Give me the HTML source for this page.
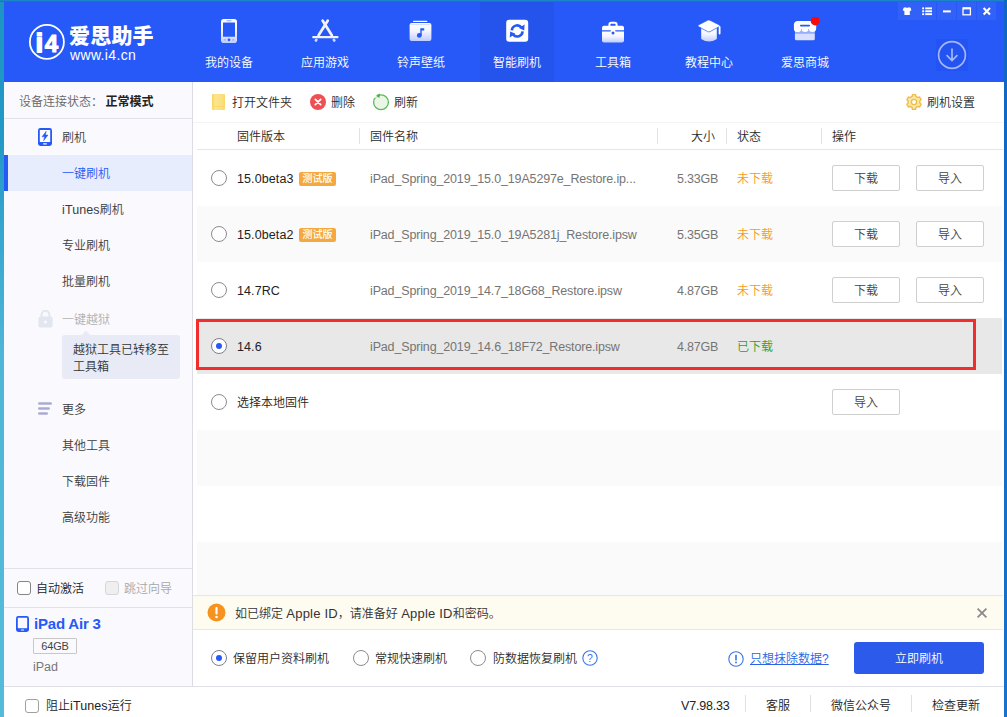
<!DOCTYPE html>
<html lang="zh-CN">
<head>
<meta charset="utf-8">
<title>爱思助手</title>
<style>
*{box-sizing:border-box;margin:0;padding:0}
html,body{width:1007px;height:717px;overflow:hidden;background:#fff}
body{font-family:"Liberation Sans","Noto Sans CJK SC",sans-serif;font-size:12px;font-weight:350;color:#2a2a2a;position:relative}
.abs{position:absolute}
.t{position:absolute;white-space:nowrap;line-height:18px;font-size:12px;margin-top:1px}
.en{font-size:12.5px;letter-spacing:-0.2px}
#frameL{left:0;top:0;width:4px;height:717px;background:linear-gradient(180deg,#1d94c4 0%,#2399c6 20%,#3aa9d0 35%,#4fb6d8 50%,#55bbdb 100%)}
#frameT{left:0;top:0;width:1007px;height:2px;background:linear-gradient(180deg,#1a86c6 0%,#1a86c6 50%,#2168e2 50%,#2168e2 100%)}
#frameR{left:1004px;top:0;width:3px;height:717px;background:linear-gradient(180deg,#0e66c4,#1672cc)}
#header{left:4px;top:2px;width:1000px;height:80px;background:#2659f7}
.nav{position:absolute;top:0;height:80px;width:96px;text-align:center;color:#fff;font-size:12px}
.nav .lbl{position:absolute;left:0;right:0;top:52px;line-height:18px}
.ico{position:absolute}
#sidebar{left:4px;top:82px;width:189px;height:604px;background:#f9f9fe;border-right:1px solid #dcdde3}
.sitem{position:absolute;left:0;width:188px;height:36px;line-height:38px;padding-left:58px;color:#3c3c3c;font-size:12px;white-space:nowrap}
.sitem.sel{background:#e7edfc;color:#2659f7}
#main{left:193px;top:82px;width:811px;height:604px;background:#fff}
.row{position:absolute;left:4px;width:805px;height:56px}
.row .c{position:absolute;top:0;line-height:58px;white-space:nowrap}
.radio{position:absolute;width:16px;height:16px;border:1px solid #8c8c8c;border-radius:50%;background:#fff}
.radio.on::after{content:"";position:absolute;left:4px;top:4px;width:6px;height:6px;border-radius:50%;background:#2659f7}
.btn{position:absolute;width:68px;height:26px;border:1px solid #cfcfcf;border-radius:2px;background:#fff;text-align:center;line-height:26px;color:#444;font-size:12px}
.tag{font-weight:500;position:absolute;width:37px;height:14px;background:#f5a83e;color:#fff;font-size:10px;line-height:14px;text-align:center;border-radius:2px}
#footer{left:4px;top:686px;width:1000px;height:31px;background:#fff;border-top:1px solid #e0e1e6}
.cb{position:absolute;width:14px;height:14px;border:1px solid #858585;border-radius:3px;background:#fff}
</style>
</head>
<body>
<div class="abs" id="header">
  <svg class="abs" style="left:24px;top:21px" width="38" height="38" viewBox="0 0 38 38">
  <circle cx="18.9" cy="18.9" r="17" fill="none" stroke="#fff" stroke-width="1.8"/>
  <text y="29.4" font-family="Liberation Sans, sans-serif" font-weight="bold" font-size="26" fill="#fff" stroke="#fff" stroke-linejoin="round"><tspan x="11.4" text-anchor="middle" stroke-width="1.8">i</tspan><tspan x="23.4" text-anchor="middle" stroke-width="1" font-size="24">4</tspan></text>
</svg>
<div class="t" style="left:65px;top:18px;font-size:21px;font-weight:900;color:#fff;line-height:30px;letter-spacing:0.2px">爱思助手</div>
<div class="t" style="left:66px;top:44px;font-size:14px;font-weight:400;color:#fff;line-height:16px;letter-spacing:0.35px">www.i4.cn</div>
  <svg width="0" height="0" style="position:absolute">
  <defs>
    <linearGradient id="gw" x1="0" y1="0" x2="0" y2="1">
      <stop offset="0" stop-color="#ffffff"/>
      <stop offset="0.45" stop-color="#f4f6ff"/>
      <stop offset="1" stop-color="#c0ccff"/>
    </linearGradient>
  </defs>
</svg>
<div class="abs" style="left:476px;top:0;width:74px;height:80px;background:#2554ec"></div>
<div class="nav" style="left:177px">
  <svg class="ico" style="left:40px;top:17px" width="16" height="24" viewBox="0 0 16 24">
    <rect x="0" y="0" width="16" height="24" rx="2.8" fill="url(#gw)"/>
    <rect x="2" y="3.4" width="12" height="14.4" rx="0.4" fill="#2659f7"/>
    <rect x="5.5" y="1.3" width="5" height="1" rx="0.5" fill="#8ba4fa"/>
    <circle cx="8" cy="20.8" r="1.4" fill="#2659f7"/>
    <rect x="2.6" y="20.2" width="2.4" height="1.2" rx="0.6" fill="#93a9fa"/>
    <rect x="11" y="20.2" width="2.4" height="1.2" rx="0.6" fill="#93a9fa"/>
  </svg>
  <div class="lbl">我的设备</div></div>
<div class="nav" style="left:273px">
  <svg class="ico" style="left:35px;top:17px" width="27" height="24" viewBox="0 0 27 24">
    <g stroke="#f0f3ff" stroke-width="2.7" stroke-linecap="round" fill="none">
      <path d="M10.7 1.7 L19.8 16.2"/>
      <path d="M15.7 1.7 L6.6 16.2"/>
      <path d="M1.3 18.2 H25.4" stroke-width="2.3"/>
      <path d="M3.9 21.5 L4.3 20.9" stroke="#d0d9ff"/>
      <path d="M22.3 21.5 L21.9 20.9" stroke="#d0d9ff"/>
    </g>
  </svg>
  <div class="lbl">应用游戏</div></div>
<div class="nav" style="left:369px">
  <svg class="ico" style="left:36px;top:17px" width="23" height="22" viewBox="0 0 23 22">
    <rect x="4" y="1.8" width="14.4" height="1.3" rx="0.6" fill="#fff"/>
    <rect x="0.6" y="4" width="21.8" height="18" rx="2" fill="url(#gw)"/>
    <rect x="1.6" y="5.4" width="19.8" height="0.7" fill="#c6d1ff"/>
    <circle cx="10.3" cy="16.4" r="2.4" fill="#2659f7"/>
    <path d="M11.3 16.4 V9.2 H15.2 V11.6 H12.7 V16.4z" fill="#2659f7"/>
  </svg>
  <div class="lbl">铃声壁纸</div></div>
<div class="nav" style="left:465px">
  <svg class="ico" style="left:37px;top:17px" width="23" height="24" viewBox="0 0 23 24">
    <rect x="0.2" y="0.8" width="22" height="22" rx="3" fill="#fff"/>
    <g fill="none" stroke="#2659f7" stroke-width="2.6">
      <path d="M5.8 11.4 A5.4 5.4 0 0 1 15.4 8.4"/>
      <path d="M16.6 12.4 A5.4 5.4 0 0 1 7 15.4"/>
    </g>
    <path d="M18.6 5.4 L18.2 11.4 L13 9z" fill="#2659f7"/>
    <path d="M3.8 18.4 L4.2 12.4 L9.4 14.8z" fill="#2659f7"/>
  </svg>
  <div class="lbl">智能刷机</div></div>
<div class="nav" style="left:561px">
  <svg class="ico" style="left:37px;top:19px" width="22" height="22" viewBox="0 0 22 22">
    <path d="M7.4 5 V3.6 A1.8 1.8 0 0 1 9.2 1.8 H12.8 A1.8 1.8 0 0 1 14.6 3.6 V5" fill="none" stroke="#fff" stroke-width="2"/>
    <path d="M0 6.8 A2 2 0 0 1 2 4.8 H20 A2 2 0 0 1 22 6.8 V9.2 H0z" fill="#fff"/>
    <path d="M0 10.6 H22 V19.4 A2 2 0 0 1 20 21.4 H2 A2 2 0 0 1 0 19.4z" fill="url(#gw)"/>
    <rect x="8.6" y="8" width="4.8" height="6.4" rx="2" fill="#fff"/><circle cx="11" cy="12" r="1.5" fill="#2659f7"/>
  </svg>
  <div class="lbl">工具箱</div></div>
<div class="nav" style="left:657px">
  <svg class="ico" style="left:36px;top:17px" width="24" height="24" viewBox="0 0 24 24">
    <path d="M4.2 9 V20 Q12 25 19.8 20 V9z" fill="url(#gw)"/>
    <path d="M10.6 1.3 Q11.8 0.6 13 1.3 L22.4 6 Q23.4 6.8 22.4 7.6 L13 12.6 Q11.8 13.2 10.6 12.6 L1.4 7.6 Q0.4 6.8 1.4 6z" fill="#fff" stroke="#2659f7" stroke-width="0.7"/>
    <path d="M22.6 8 V14.6" stroke="#fff" stroke-width="1.8" fill="none" stroke-linecap="round"/>
  </svg>
  <div class="lbl">教程中心</div></div>
<div class="nav" style="left:753px">
  <svg class="ico" style="left:36px;top:15px" width="30" height="26" viewBox="0 0 30 26">
    <path d="M1.9 16.4 H21.8 V21.8 A1.5 1.5 0 0 1 20.3 23.3 H3.4 A1.5 1.5 0 0 1 1.9 21.8z" fill="#d9e0ff"/><path d="M1.9 13 H21.8 V16.6 H1.9z" fill="#f4f6ff" opacity="0.55"/>
    <path d="M4.6 3.9 H19.5 Q22.4 3.9 23.2 7 V11.4 a3.72 3.72 0 0 1 -7.43 0 a3.72 3.72 0 0 1 -7.43 0 a3.72 3.72 0 0 1 -7.44 0 V7 Q1.7 3.9 4.6 3.9z" fill="#fff"/>
    <rect x="7" y="7.8" width="10" height="1.7" rx="0.8" fill="#2659f7"/>
    <circle cx="22.2" cy="3.9" r="4.5" fill="#fa0a0a"/>
  </svg>
  <div class="lbl">爱思商城</div></div>
  <div class="abs" style="left:893.6px;top:0;width:19px;height:17.5px;background:#3161f7"></div>
<div class="abs" style="left:913.4px;top:0;width:19px;height:17.5px;background:#3161f7"></div>
<div class="abs" style="left:933.2px;top:0;width:19px;height:17.5px;background:#3161f7"></div>
<div class="abs" style="left:953.4px;top:0;width:19px;height:17.5px;background:#3161f7"></div>
<div class="abs" style="left:973.2px;top:0;width:19px;height:17.5px;background:#3161f7"></div>
<svg class="abs" style="left:893px;top:0.7px" width="100" height="17" viewBox="0 0 100 17">
  <path d="M6.6 4.8 L8.4 4.2 Q10.1 5.4 11.8 4.2 L13.6 4.8 L14.4 7.4 L12.8 8 V12 H7.4 V8 L5.8 7.4z" fill="#fff"/>
  <g fill="#fff">
    <rect x="25.2" y="4.4" width="1.9" height="1.9"/><rect x="28.2" y="4.4" width="6.8" height="1.9"/>
    <rect x="25.2" y="7.3" width="1.9" height="1.9"/><rect x="28.2" y="7.3" width="6.8" height="1.9"/>
    <rect x="25.2" y="10.2" width="1.9" height="1.9"/><rect x="28.2" y="10.2" width="6.8" height="1.9"/>
    <rect x="46" y="7.4" width="7.8" height="2"/>
  </g>
  <rect x="66" y="5" width="7.4" height="6.8" fill="none" stroke="#fff" stroke-width="1.3"/>
  <rect x="66" y="4.4" width="7.4" height="2" fill="#fff"/>
  <path d="M86.6 4.9 L93 11.5 M93 4.9 L86.6 11.5" stroke="#fff" stroke-width="2.1" fill="none"/>
</svg>
<svg class="abs" style="left:933px;top:38px;overflow:visible" width="30" height="30" viewBox="0 0 30 30">
  <rect x="-1" y="-1" width="32" height="32" fill="#2354f2"/><circle cx="15" cy="15" r="13.4" fill="none" stroke="#a3b8fc" stroke-width="1.7"/>
  <path d="M15 8.4 V20.4 M9.6 15.2 L15 20.6 L20.4 15.2" fill="none" stroke="#a3b8fc" stroke-width="1.7"/>
</svg>
</div>

<div class="abs" id="sidebar">
  <div class="abs" style="left:0;top:0;width:188px;height:37px;border-bottom:1px solid #e1e3ea"></div>
<div class="t" style="left:15px;top:10px;color:#666">设备连接状态：<b style="color:#222;margin-left:2.5px">正常模式</b></div>
<svg class="abs" style="left:34px;top:46px" width="14" height="18" viewBox="0 0 14 18">
  <rect x="0" y="0" width="14" height="18" rx="2.4" fill="#2659f7"/>
  <rect x="1.8" y="2" width="10.4" height="12" rx="0.6" fill="#fff"/>
  <rect x="5" y="15.2" width="4" height="1.2" rx="0.6" fill="#fff"/>
  <path d="M8.2 3.2 L4 8.8 H6.6 L5.6 12.8 L10 7 H7.4z" fill="#2659f7" stroke="#2659f7" stroke-width="0.5" stroke-linejoin="round"/>
</svg>
<div class="sitem" style="top:37px">刷机</div>
<div class="sitem sel" style="top:73px">一键刷机</div>
<div class="abs" style="left:0;top:73px;width:4px;height:36px;background:#2659f7"></div>
<div class="sitem" style="top:109px"><span class="en" style="letter-spacing:0.1px">iTunes</span>刷机</div>
<div class="sitem" style="top:145px">专业刷机</div>
<div class="sitem" style="top:181px">批量刷机</div>
<svg class="abs" style="left:33.6px;top:227.5px" width="15" height="18" viewBox="0 0 15 18">
  <path d="M3.6 7 V4.6 A3.9 3.9 0 0 1 11.4 4.6 V7" fill="none" stroke="#e3e6f0" stroke-width="2"/>
  <rect x="0.4" y="6.6" width="14.2" height="11" rx="2" fill="#e3e6f0"/>
  <circle cx="7.5" cy="12" r="1.6" fill="#f9f9fe"/>
</svg>
<div class="sitem" style="top:219px;color:#b0b0b0">一键越狱</div>
<svg class="abs" style="left:77px;top:248px" width="10" height="6" viewBox="0 0 10 6"><path d="M0 6 L5 0.6 L10 6z" fill="#e8ebf5"/></svg>
<div class="abs" style="left:58px;top:253px;width:118px;height:44px;background:#e8ebf5;border-radius:3px"></div>
<div class="t" style="left:69px;top:259px;line-height:17px;white-space:normal;width:100px;color:#333">越狱工具已转移至<br>工具箱</div>
<svg class="abs" style="left:34px;top:320px" width="14" height="13" viewBox="0 0 14 13">
  <rect x="0" y="0.2" width="14" height="2.6" rx="1.3" fill="#a9acd2"/>
  <rect x="0" y="5.2" width="12" height="2.6" rx="1.3" fill="#a9acd2"/>
  <rect x="0" y="10.2" width="10" height="2.6" rx="1.3" fill="#a9acd2"/>
</svg>
<div class="sitem" style="top:309px">更多</div>
<div class="sitem" style="top:345px">其他工具</div>
<div class="sitem" style="top:381px">下载固件</div>
<div class="sitem" style="top:417px">高级功能</div>

<div class="abs" style="left:0;top:486px;width:188px;height:1px;background:#e1e3ea"></div>
<div class="cb" style="left:13px;top:499px"></div>
<div class="t" style="left:32px;top:497px;color:#222">自动激活</div>
<div class="cb" style="left:101px;top:499px;border-color:#d6d6d6;background:#efefef"></div>
<div class="t" style="left:120px;top:497px;color:#a8a8a8">跳过向导</div>
<div class="abs" style="left:0;top:525px;width:188px;height:1px;background:#e1e3ea"></div>
<svg class="abs" style="left:12px;top:534px" width="13" height="16" viewBox="0 0 13 16">
  <rect x="0" y="0" width="13" height="16" rx="2.4" fill="#2659f7"/>
  <rect x="1.8" y="1.8" width="9.4" height="10.4" rx="0.6" fill="#f9f9fe"/>
  <rect x="4.8" y="13.4" width="3.4" height="1.2" rx="0.6" fill="#f9f9fe"/>
</svg>
<div class="t" style="left:30px;top:531px;font-size:15px;font-weight:bold;color:#2659f7;line-height:20px;letter-spacing:-0.2px">iPad Air 3</div>
<div class="abs" style="left:29px;top:556px;width:44px;height:16px;border:1px solid #c8c8c8;border-radius:1px"></div>
<div class="t en" style="left:29px;top:554px;width:44px;text-align:center;color:#444;font-size:11px;letter-spacing:-0.1px">64GB</div>
<div class="t en" style="left:29px;top:575px;color:#777;font-size:12.5px;letter-spacing:0">iPad</div>
</div>

<div class="abs" id="main">
  <!-- toolbar -->
<svg class="abs" style="left:19px;top:12px" width="13" height="16" viewBox="0 0 13 16">
  <defs><linearGradient id="gf" x1="0" y1="0" x2="1" y2="0"><stop offset="0" stop-color="#f8d45c"/><stop offset="0.25" stop-color="#fde58e"/><stop offset="0.8" stop-color="#fbdf7c"/><stop offset="1" stop-color="#f8d766"/></linearGradient></defs>
  <rect x="0" y="0" width="13" height="16" rx="1" fill="url(#gf)"/>
  <rect x="1.5" y="12.2" width="10.5" height="0.8" fill="#f6d25c" opacity="0.7"/>
</svg>
<div class="t" style="left:39px;top:11px">打开文件夹</div>
<svg class="abs" style="left:116px;top:11px" width="18" height="18" viewBox="0 0 18 18">
  <circle cx="9" cy="9" r="8" fill="#ee4f52"/>
  <path d="M6.3 6.3 L11.7 11.7 M11.7 6.3 L6.3 11.7" stroke="#fff" stroke-width="1.7" stroke-linecap="round"/>
</svg>
<div class="t" style="left:138px;top:11px">删除</div>
<svg class="abs" style="left:178px;top:10px" width="20" height="20" viewBox="0 0 20 20">
  <circle cx="10" cy="10.2" r="7.4" fill="#eaf6e6" stroke="#5dba5d" stroke-width="1.3"/>
  <path d="M4.6 3.4 L9 1.4 L8.4 6z" fill="#4db04d"/>
  <path d="M3.2 5.6 L5.6 3.6" stroke="#fff" stroke-width="1.6"/>
</svg>
<div class="t" style="left:201px;top:11px">刷新</div>
<svg class="abs" style="left:711.8px;top:11px" width="18" height="18" viewBox="0 0 18 18">
  <path d="M7.15 3.29 L7.44 1.66 L10.56 1.66 L10.85 3.29 L13.01 4.54 L14.57 3.98 L16.13 6.68 L14.87 7.75 L14.87 10.25 L16.13 11.32 L14.57 14.02 L13.01 13.46 L10.85 14.71 L10.56 16.34 L7.44 16.34 L7.15 14.71 L4.99 13.46 L3.43 14.02 L1.87 11.32 L3.13 10.25 L3.13 7.75 L1.87 6.68 L3.43 3.98 L4.99 4.54z" fill="#fbe7a6" stroke="#efbc48" stroke-width="1.4" stroke-linejoin="round"/>
  <circle cx="9" cy="9" r="2.6" fill="#fff" stroke="#efbc48" stroke-width="1.3"/>
</svg>
<div class="t" style="left:734px;top:11px">刷机设置</div>
<!-- table header -->
<div class="abs" style="left:0;top:40px;width:811px;height:1px;background:#f4f4f4"></div>
<div class="abs" style="left:4px;top:67px;width:806px;height:1px;background:#e6e6e6"></div>
<div class="t" style="left:44px;top:45px">固件版本</div>
<div class="t" style="left:177px;top:45px">固件名称</div>
<div class="t" style="left:498px;top:45px">大小</div>
<div class="t" style="left:544px;top:45px">状态</div>
<div class="t" style="left:639px;top:45px">操作</div>
<div class="abs" style="left:166px;top:46px;width:1px;height:16px;background:#e2e2e2"></div>
<div class="abs" style="left:464px;top:46px;width:1px;height:16px;background:#e2e2e2"></div>
<div class="abs" style="left:533px;top:46px;width:1px;height:16px;background:#e2e2e2"></div>
<div class="abs" style="left:628px;top:46px;width:1px;height:16px;background:#e2e2e2"></div>
<!-- rows -->
<div class="row" style="top:68px">
  <div class="radio" style="left:14px;top:20px"></div>
  <div class="c en" style="left:40px;color:#222;letter-spacing:0.1px">15.0beta3</div>
  <div class="tag" style="left:102px;top:22px">测试版</div>
  <div class="c en" style="left:173px;color:#757575;letter-spacing:-0.15px">iPad_Spring_2019_15.0_19A5297e_Restore.ip...</div>
  <div class="c en" style="left:480px;color:#757575">5.33GB</div>
  <div class="c" style="left:540px;color:#f39a1e">未下载</div>
  <div class="btn" style="left:635px;top:15px">下载</div>
  <div class="btn" style="left:719px;top:15px">导入</div>
</div>
<div class="row" style="top:124px;background:#fafafa">
  <div class="radio" style="left:14px;top:20px"></div>
  <div class="c en" style="left:40px;color:#222;letter-spacing:0.1px">15.0beta2</div>
  <div class="tag" style="left:102px;top:22px">测试版</div>
  <div class="c en" style="left:173px;color:#757575;letter-spacing:-0.15px">iPad_Spring_2019_15.0_19A5281j_Restore.ipsw</div>
  <div class="c en" style="left:480px;color:#757575">5.35GB</div>
  <div class="c" style="left:540px;color:#f39a1e">未下载</div>
  <div class="btn" style="left:635px;top:15px">下载</div>
  <div class="btn" style="left:719px;top:15px">导入</div>
</div>
<div class="row" style="top:180px">
  <div class="radio" style="left:14px;top:20px"></div>
  <div class="c en" style="left:40px;color:#222;letter-spacing:0.1px">14.7RC</div>
  <div class="c en" style="left:173px;color:#757575;letter-spacing:-0.15px">iPad_Spring_2019_14.7_18G68_Restore.ipsw</div>
  <div class="c en" style="left:480px;color:#757575">4.87GB</div>
  <div class="c" style="left:540px;color:#f39a1e">未下载</div>
  <div class="btn" style="left:635px;top:15px">下载</div>
  <div class="btn" style="left:719px;top:15px">导入</div>
</div>
<div class="row" style="top:236px;background:#e8e8e8">
  <div class="radio on" style="left:14px;top:20px;border-color:#7b7f8c"></div>
  <div class="c en" style="left:40px;color:#222;letter-spacing:0.1px">14.6</div>
  <div class="c en" style="left:173px;color:#757575;letter-spacing:-0.15px">iPad_Spring_2019_14.6_18F72_Restore.ipsw</div>
  <div class="c en" style="left:480px;color:#757575">4.87GB</div>
  <div class="c" style="left:540px;color:#2aa12a">已下载</div>
</div>
<div class="abs" style="left:3px;top:237px;width:780px;height:51px;border:3px solid #f22d2d"></div>
<div class="row" style="top:292px">
  <div class="radio" style="left:14px;top:20px"></div>
  <div class="c" style="left:40px;color:#222">选择本地固件</div>
  <div class="btn" style="left:635px;top:15px">导入</div>
</div>
<div class="row" style="top:348px;background:#fafafa"></div>
<div class="row" style="top:460px;background:#fafafa;height:53px"></div>

<!-- notice -->
<div class="abs" style="left:0;top:513px;width:810px;height:35px;background:#fefbf0;border-top:1px solid #f6e8b4;border-bottom:1px solid #ece8da"></div>
<svg class="abs" style="left:14.4px;top:521px" width="19" height="19" viewBox="0 0 19 19">
  <circle cx="9.5" cy="9.5" r="9" fill="#f6921e"/>
  <rect x="8.4" y="4" width="2.2" height="7.4" rx="1" fill="#fff"/>
  <circle cx="9.5" cy="14" r="1.3" fill="#fff"/>
</svg>
<div class="t" style="left:42px;top:522px;color:#333"><span>如已绑定 </span><span class="en" style="font-size:13px;letter-spacing:0.2px">Apple ID</span>，请准备好 <span class="en" style="font-size:13px;letter-spacing:0.2px">Apple ID</span>和密码。</div>
<svg class="abs" style="left:783px;top:525px" width="12" height="12" viewBox="0 0 12 12">
  <path d="M1.6 1.6 L10.4 10.4 M10.4 1.6 L1.6 10.4" stroke="#8a8a8a" stroke-width="1.8"/>
</svg>
<!-- bottom actions -->
<div class="radio on" style="left:18px;top:568px;border-color:#7b7f8c"></div>
<div class="t" style="left:40px;top:567px">保留用户资料刷机</div>
<div class="radio" style="left:160px;top:568px"></div>
<div class="t" style="left:182px;top:567px">常规快速刷机</div>
<div class="radio" style="left:277px;top:568px"></div>
<div class="t" style="left:300px;top:567px">防数据恢复刷机</div>
<svg class="abs" style="left:388.4px;top:567px" width="18" height="18" viewBox="0 0 18 18">
  <circle cx="9" cy="9" r="7.2" fill="#fff" stroke="#3a74e4" stroke-width="1.1"/>
  <text x="9" y="12.8" text-anchor="middle" font-family="Liberation Sans, sans-serif" font-size="10.5" fill="#3a74e4">?</text>
</svg>
<svg class="abs" style="left:534px;top:567.5px" width="18" height="18" viewBox="0 0 18 18">
  <circle cx="9" cy="9" r="7.2" fill="#fff" stroke="#3a74e4" stroke-width="1.1"/>
  <rect x="8.2" y="4.8" width="1.6" height="5.6" fill="#3a74e4"/>
  <rect x="8.2" y="11.6" width="1.6" height="1.7" fill="#3a74e4"/>
</svg>
<div class="t" style="left:557px;top:567px;color:#2a64e4;text-decoration:underline;text-underline-offset:1px">只想抹除数据?</div>
<div class="abs" style="left:661px;top:560px;width:130px;height:32px;background:#2c5beb;border-radius:3px"></div>
<div class="t" style="left:661px;top:567px;width:130px;text-align:center;color:#fff">立即刷机</div>
</div>

<div class="abs" id="footer">
  <div class="cb" style="left:21px;top:12px;border-color:#a0a0a0"></div>
<div class="t" style="left:42px;top:9px;color:#222">阻止<span class="en" style="letter-spacing:0.1px">iTunes</span>运行</div>
<div class="t en" style="left:677px;top:9px;color:#222">V7.98.33</div>
<div class="t" style="left:762px;top:9px;color:#222">客服</div>
<div class="t" style="left:827px;top:9px;color:#222">微信公众号</div>
<div class="t" style="left:928px;top:9px;color:#222">检查更新</div>
<div class="abs" style="left:741px;top:8px;width:1px;height:17px;background:#e0e0e0"></div>
<div class="abs" style="left:806px;top:8px;width:1px;height:17px;background:#e0e0e0"></div>
<div class="abs" style="left:907px;top:8px;width:1px;height:17px;background:#e0e0e0"></div>
</div>

<div class="abs" id="frameL"></div>
<div class="abs" id="frameT"></div>
<div class="abs" id="frameR"></div>
</body>
</html>
